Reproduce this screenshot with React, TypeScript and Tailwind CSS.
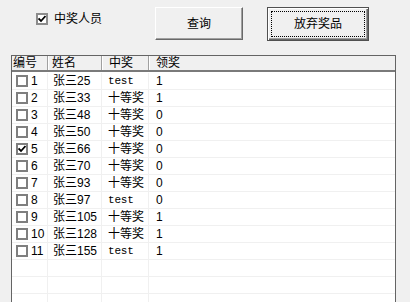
import React from "react";

type Row = { id: number; name: string; prize: string; got: string; checked?: boolean };

const rows: Row[] = [
  { id: 1, name: "张三25", prize: "test", got: "1" },
  { id: 2, name: "张三33", prize: "十等奖", got: "1" },
  { id: 3, name: "张三48", prize: "十等奖", got: "0" },
  { id: 4, name: "张三50", prize: "十等奖", got: "0" },
  { id: 5, name: "张三66", prize: "十等奖", got: "0", checked: true },
  { id: 6, name: "张三70", prize: "十等奖", got: "0" },
  { id: 7, name: "张三93", prize: "十等奖", got: "0" },
  { id: 8, name: "张三97", prize: "test", got: "0" },
  { id: 9, name: "张三105", prize: "十等奖", got: "1" },
  { id: 10, name: "张三128", prize: "十等奖", got: "1" },
  { id: 11, name: "张三155", prize: "test", got: "1" },
];

function Check() {
  return (
    <svg width="8" height="8" viewBox="0 0 8 8">
      <path d="M0.5 3.5 L3 6 L7.5 1" fill="none" stroke="#000" strokeWidth="1.8" />
    </svg>
  );
}

function RowBox({ checked }: { checked?: boolean }) {
  return (
    <span className="flex h-[12px] w-[12px] shrink-0 items-center justify-center border-2 border-[#7f7f7f] bg-white">
      {checked && <Check />}
    </span>
  );
}

export default function App() {
  const empty = [0, 1, 2];
  return (
    <div className="h-[302px] w-[410px] overflow-hidden bg-[#f0f0f0] font-['Liberation_Sans','Noto_Sans_CJK_SC',sans-serif] text-[12px] leading-none text-black">
      <div className="flex h-[55px] items-start">
        <label className="ml-[36px] mt-[13px] flex w-[119px] items-center gap-[6px]">
          <span className="flex h-[12px] w-[12px] shrink-0 items-center justify-center border-2 border-[#8c8c8c] bg-white">
            <Check />
          </span>
          <span>中奖人员</span>
        </label>
        <button className="mt-[7px] flex h-[33px] w-[88px] items-center justify-center border border-t-white border-l-white border-r-[#696969] border-b-[#696969] bg-[#f0f0f0] shadow-[inset_-1px_-1px_#a0a0a0]">
          查询
        </button>
        <button className="ml-[24px] mt-[7px] h-[34px] w-[102px] border border-[#505050] bg-[#f0f0f0] p-[3px] shadow-[inset_1px_1px_#fff,inset_-1px_-1px_#696969,inset_-2px_-2px_#a0a0a0]">
          <span className="flex h-full w-full items-center justify-center border border-dotted border-black">
            放弃奖品
          </span>
        </button>
      </div>

      <div className="ml-[11px] w-[385px] border-x border-t border-[#646464] bg-white">
        <div className="flex h-[16px] border-b-2 border-[#7a7a7a] bg-[#f0f0f0]">
          <div className="flex w-[36px] items-center border-r border-[#a0a0a0] pl-[1px]">编号</div>
          <div className="flex w-[54px] items-center border-l border-r border-l-white border-r-[#a0a0a0] pl-[3px]">姓名</div>
          <div className="flex w-[47px] items-center border-l border-r border-l-white border-r-[#a0a0a0] pl-[6px]">中奖</div>
          <div className="flex flex-1 items-center border-l border-l-white pl-[6px]">领奖</div>
        </div>
        <div className="pt-[1px]">
          {rows.map((r) => (
            <div key={r.id} className="flex h-[17px] border-b border-[#f0f0f0]">
              <div className="flex w-[36px] items-center gap-[3px] border-r border-[#f0f0f0] pl-[4px]">
                <RowBox checked={r.checked} />
                <span>{r.id}</span>
              </div>
              <div className="flex w-[54px] items-center border-r border-[#f0f0f0] pl-[5px]">{r.name}</div>
              <div
                className={
                  r.prize === "test"
                    ? "flex w-[47px] items-center border-r border-[#f0f0f0] pl-[6px] font-['Liberation_Mono',monospace] text-[11px] tracking-[-0.2px]"
                    : "flex w-[47px] items-center border-r border-[#f0f0f0] pl-[6px]"
                }
              >
                {r.prize}
              </div>
              <div className="flex flex-1 items-center pl-[7px]">{r.got}</div>
            </div>
          ))}
          {empty.map((i) => (
            <div key={i} className="flex h-[17px] border-b border-[#f0f0f0]">
              <div className="w-[36px] border-r border-[#f0f0f0]" />
              <div className="w-[54px] border-r border-[#f0f0f0]" />
              <div className="w-[47px] border-r border-[#f0f0f0]" />
              <div className="flex-1" />
            </div>
          ))}
        </div>
      </div>
    </div>
  );
}
